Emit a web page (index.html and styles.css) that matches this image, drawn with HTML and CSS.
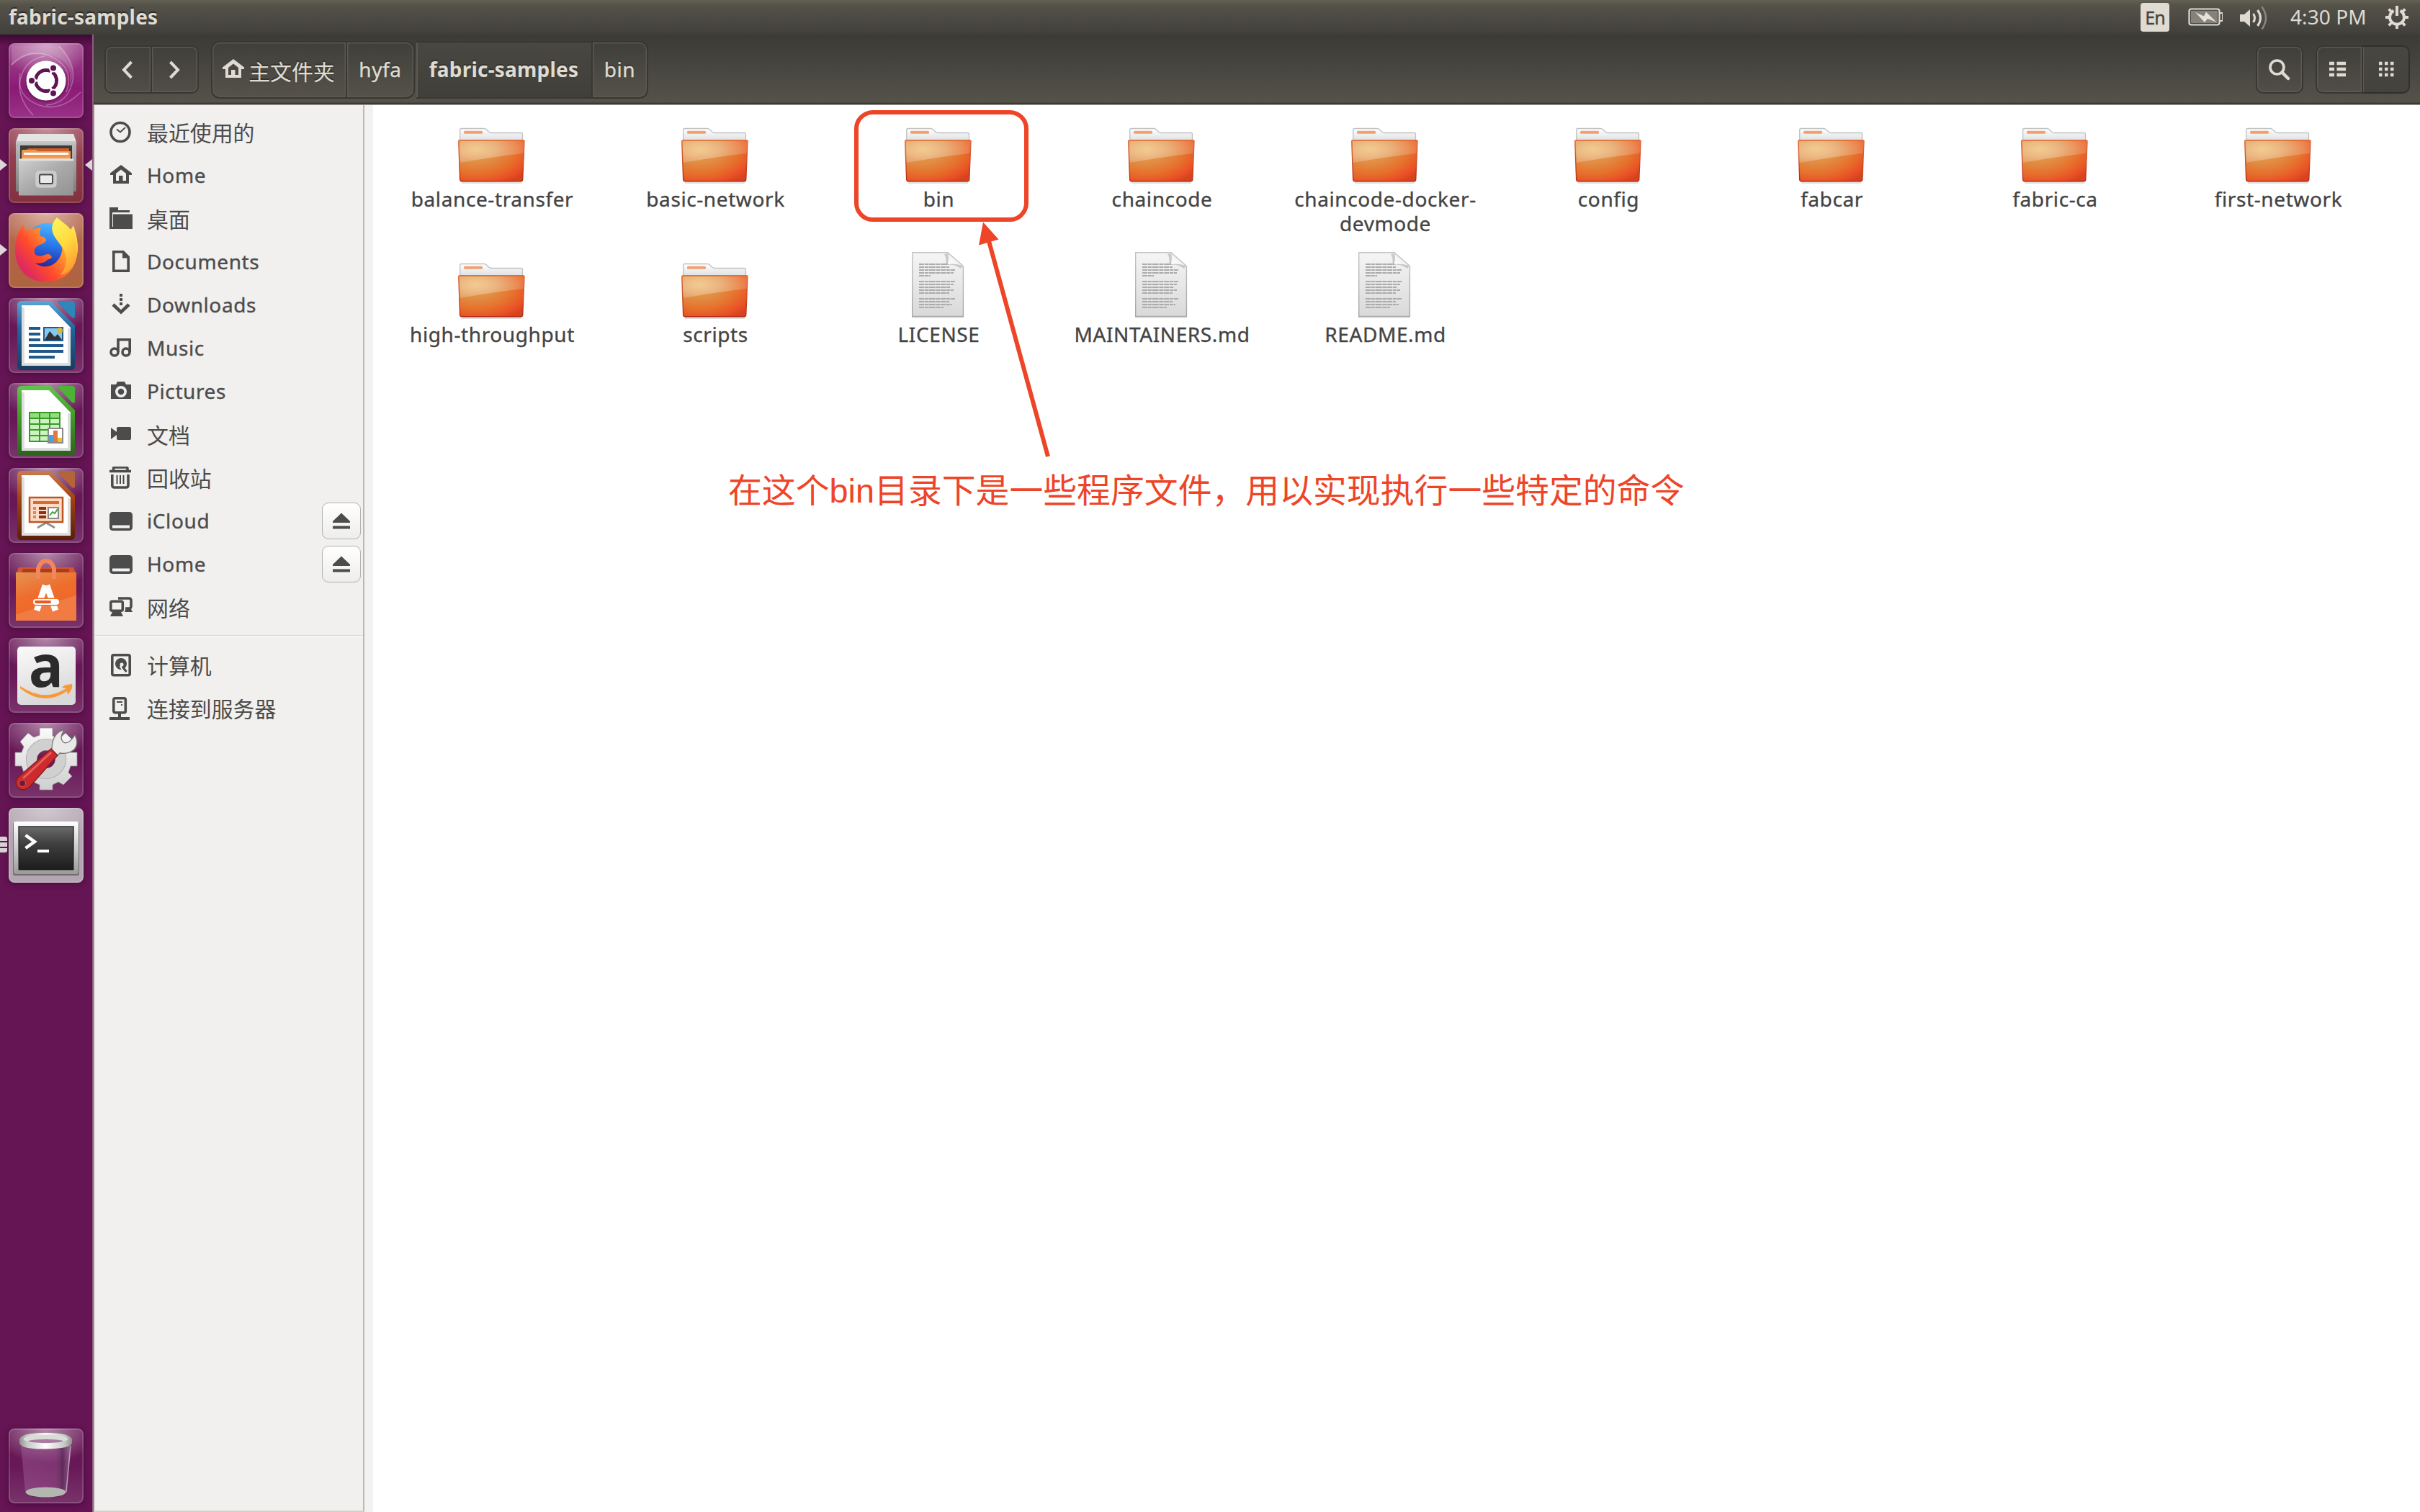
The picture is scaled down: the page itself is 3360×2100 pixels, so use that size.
FILE: index.html
```html
<!DOCTYPE html>
<html lang="zh-CN">
<head>
<meta charset="utf-8">
<title>fabric-samples</title>
<link rel="stylesheet" href="styles.css">
</head>
<body>
<svg class="defs" width="0" height="0" aria-hidden="true">
  <defs>
    <radialGradient id="folderFront" cx="0.27" cy="0.2" r="0.95">
      <stop offset="0" stop-color="#e6a653"/><stop offset="0.35" stop-color="#e18f45"/><stop offset="0.65" stop-color="#e6702c"/><stop offset="0.88" stop-color="#ea4f25"/><stop offset="1" stop-color="#d5431f"/>
    </radialGradient>
    <linearGradient id="folderBack" x1="0" y1="0" x2="0" y2="1"><stop offset="0" stop-color="#fff"/><stop offset="1" stop-color="#d5d7da"/></linearGradient>
    <radialGradient id="folderGloss" cx="0.27" cy="0.4" r="0.8"><stop offset="0" stop-color="#ffeecb" stop-opacity="0.5"/><stop offset="0.5" stop-color="#fff" stop-opacity="0.28"/><stop offset="1" stop-color="#fff" stop-opacity="0.12"/></radialGradient>
    <linearGradient id="folderEdge" x1="0" y1="0" x2="0" y2="1"><stop offset="0" stop-color="#e07040"/><stop offset="1" stop-color="#b02c12"/></linearGradient>
    <linearGradient id="paper" x1="0" y1="0" x2="0" y2="1"><stop offset="0" stop-color="#f5f5f5"/><stop offset="1" stop-color="#d9d9d9"/></linearGradient>
    <linearGradient id="paperEdge" x1="0" y1="0" x2="0" y2="1"><stop offset="0" stop-color="#c4c4c4"/><stop offset="1" stop-color="#a6a6a6"/></linearGradient>
    <linearGradient id="curl" x1="0" y1="1" x2="1" y2="0"><stop offset="0" stop-color="#fff"/><stop offset="0.45" stop-color="#f4f4f4"/><stop offset="0.6" stop-color="#c9c9c9"/></linearGradient>
    <linearGradient id="steel" x1="0" y1="0" x2="0" y2="1"><stop offset="0" stop-color="#e2e2e2"/><stop offset="0.2" stop-color="#b9b9b9"/><stop offset="1" stop-color="#7c7c7c"/></linearGradient>
    <linearGradient id="drawer" x1="0" y1="0" x2="1" y2="1"><stop offset="0" stop-color="#cfcfcf"/><stop offset="0.5" stop-color="#a9a9a9"/><stop offset="1" stop-color="#929292"/></linearGradient>
    <linearGradient id="foxRed" x1="0.9" y1="0.1" x2="0.1" y2="0.7"><stop offset="0" stop-color="#ffe14b"/><stop offset="0.35" stop-color="#ff9a30"/><stop offset="0.7" stop-color="#ff4a2c"/><stop offset="1" stop-color="#e02a5e"/></linearGradient>
    <linearGradient id="foxGlobe" x1="0.6" y1="0" x2="0.4" y2="1"><stop offset="0" stop-color="#4db8ff"/><stop offset="0.5" stop-color="#2672e8"/><stop offset="1" stop-color="#2c1c86"/></linearGradient>
    <linearGradient id="foxTail" x1="0.2" y1="0" x2="0.6" y2="1"><stop offset="0" stop-color="#fff45a"/><stop offset="0.5" stop-color="#ffd93f"/><stop offset="1" stop-color="#ff9a32"/></linearGradient>
    <linearGradient id="loBlue" x1="0" y1="0" x2="0" y2="1"><stop offset="0" stop-color="#5aa5d4"/><stop offset="0.4" stop-color="#22659d"/><stop offset="1" stop-color="#173c60"/></linearGradient>
    <linearGradient id="loGreen" x1="0" y1="0" x2="0" y2="1"><stop offset="0" stop-color="#62c34b"/><stop offset="0.4" stop-color="#43a02b"/><stop offset="1" stop-color="#2b641c"/></linearGradient>
    <linearGradient id="loBrown" x1="0" y1="0" x2="0" y2="1"><stop offset="0" stop-color="#c77b4c"/><stop offset="0.4" stop-color="#a04312"/><stop offset="1" stop-color="#58200a"/></linearGradient>
    <linearGradient id="bag" x1="0" y1="0" x2="0.4" y2="1"><stop offset="0" stop-color="#e59352"/><stop offset="0.5" stop-color="#ee6d2d"/><stop offset="0.75" stop-color="#ef6a2a"/><stop offset="0.76" stop-color="#f07b43"/><stop offset="1" stop-color="#f07b43"/></linearGradient>
    <linearGradient id="plate" x1="0" y1="0" x2="0.3" y2="1"><stop offset="0" stop-color="#fafafa"/><stop offset="1" stop-color="#d9d9d9"/></linearGradient>
    <linearGradient id="gearFill" x1="0" y1="0" x2="0" y2="1"><stop offset="0" stop-color="#fafafa"/><stop offset="1" stop-color="#cfcfcf"/></linearGradient>
    <linearGradient id="screen" x1="0" y1="0" x2="0" y2="1"><stop offset="0" stop-color="#6a6a6a"/><stop offset="0.4" stop-color="#3f3f3f"/><stop offset="1" stop-color="#1c1c1c"/></linearGradient>
    <linearGradient id="bezel" x1="0" y1="0" x2="0" y2="1"><stop offset="0" stop-color="#fff"/><stop offset="1" stop-color="#9a9a9a"/></linearGradient>
    <linearGradient id="rim" x1="0" y1="0" x2="1" y2="0"><stop offset="0" stop-color="#8f948c"/><stop offset="0.15" stop-color="#c8cac6"/><stop offset="0.5" stop-color="#fff"/><stop offset="0.85" stop-color="#c8cac6"/><stop offset="1" stop-color="#8f948c"/></linearGradient>
    <linearGradient id="can" x1="0" y1="0" x2="1" y2="0"><stop offset="0" stop-color="#a0609a" stop-opacity="0.45"/><stop offset="0.7" stop-color="#9a5590" stop-opacity="0.45"/><stop offset="0.84" stop-color="#58305a" stop-opacity="0.7"/><stop offset="1" stop-color="#b784ae" stop-opacity="0.5"/></linearGradient>
  </defs>

  <symbol id="folder" viewBox="0 0 96 96">
    <path d="M7 93.500H90" stroke="#000" stroke-opacity="0.13" stroke-width="3"/>
    <path d="M4.700 40V20.500q0-2 2-2H38q2 0 3.500 1.500L45 23.300q1.500 1.200 3.500 1.200H89.500q2 0 2 2V40z" fill="url(#folderBack)" stroke="#bfc1c3" stroke-width="1.300"/>
    <rect x="10" y="21.800" width="26" height="4" rx="1.500" fill="#f0a170"/>
    <path d="M2.700 36.300q0-1.500 1.500-1.500H92.500q1.700 0 1.500 1.700L91.700 89.700q-.2 2-2 2H6.700q-1.800 0-2-2z" fill="url(#folderFront)" stroke="url(#folderEdge)" stroke-width="1.400"/>
    <path d="M4 36H93L92.600 53Q50 58 4.500 66z" fill="url(#folderGloss)"/>
  </symbol>

  <symbol id="document" viewBox="0 0 96 96">
    <path d="M12 93H84" stroke="#000" stroke-opacity="0.12" stroke-width="2"/>
    <path d="M12.700 2.700H62L83.400 21.500V91.400H12.700z" fill="url(#paper)" stroke="url(#paperEdge)" stroke-width="1.400"/>
    <g stroke="#ababab" stroke-width="2" stroke-dasharray="7 .8 5 .8 9 .8 6 .8">
      <path d="M22 19H62M22 23H64M22 27H72M22 31H70M22 35H38M22 43H72M22 47H70M22 51H66M22 55H70M22 59H64M22 67H72M22 71H64M22 75H68M22 79H56"/>
    </g>
    <path d="M57 5Q61 12 59 20Q70 18 80 25L82 22L62 4z" fill="#000" fill-opacity="0.16"/>
    <path d="M62 3Q63 12 61.500 19.500Q70 18 83 21.500z" fill="url(#curl)" stroke="#c0c0c0" stroke-width="0.800"/>
  </symbol>

  <symbol id="s-home" viewBox="0 0 32 32"><path d="M16 1L31 12.500V15H27V27H5V15H1V12.500z M9 13V23H13V16H18.500V23H23V13L16 7.500z" fill="currentColor" fill-rule="evenodd"/></symbol>
  <symbol id="s-eject" viewBox="0 0 24 24"><path d="M12 1.500L24 13V15H0V13z M0 19.500H24V23.500H0z" fill="currentColor"/></symbol>
  <symbol id="s-drive" viewBox="0 0 32 32"><path d="M5 3H27q5 0 5 5V24q0 5-5 5H5q-5 0-5-5V8q0-5 5-5z M4 21.500V25.500H28V21.500z" fill="currentColor" fill-rule="evenodd"/></symbol>
</svg>

<header class="panel">
  <span class="panel-title">fabric-samples</span>
  <span class="panel-lang">En</span>
  <svg class="panel-battery" viewBox="0 0 48 28"><rect x="1.500" y="2.500" width="42" height="22" rx="3" fill="none" stroke="#dfdbd2" stroke-width="2.200"/><rect x="4" y="5" width="37" height="17" fill="#85827b"/><path d="M44 8h2.500q1.500 0 1.500 1.500v8q0 1.500-1.500 1.500H44" fill="none" stroke="#dfdbd2" stroke-width="2"/><path d="M10 7L22 12.500L25 6.500L39 20.500L27 16L23 21z" fill="#e6e2da"/></svg>
  <svg class="panel-volume" viewBox="0 0 38 34"><path d="M0 12H6L14 5V29L6 22H0z" fill="#dfdbd2"/><g fill="none" stroke="#dfdbd2" stroke-width="3"><path d="M18.500 11q4 6 0 12"/><path d="M24.500 6q8 11 0 22"/><path d="M30.500 1.500q11 15.500 0 31" stroke="#8b8880" stroke-width="2.400"/></g></svg>
  <span class="panel-clock">4:30 PM</span>
  <svg class="panel-gear" viewBox="0 0 32 32"><g fill="none" stroke="#dfdbd2"><path d="M20.500 6.900A10 10 0 1 1 11.500 6.900" stroke-width="4"/><path d="M16 0V14" stroke-width="4"/><path d="M0 16H5M27 16H32M16 27V32M4.700 4.700L8.500 8.500M27.300 4.700L23.500 8.500M4.700 27.300L8.500 23.500M27.300 27.300L23.500 23.500" stroke-width="3.800"/></g></svg>
</header>

<div class="desktop">
  <nav class="launcher">
    <div class="tile tile-dash">
      <svg viewBox="0 0 104 104"><g fill="none" stroke="#fff" stroke-opacity="0.28" stroke-width="1.600"><path d="M4 30Q30 4 62 20Q92 36 80 68"/><path d="M70 4Q98 32 86 62Q78 84 52 86"/><path d="M100 68Q72 96 42 86Q10 74 16 42"/><path d="M34 100Q8 72 18 44Q26 22 50 18"/></g><path d="M4 3H70Q98 34 84 60Q92 20 50 16Q22 12 4 32z" fill="#fff" fill-opacity="0.14"/><circle cx="52" cy="54" r="28.500" fill="#000" fill-opacity="0.2"/><circle cx="52" cy="52" r="27.500" fill="#fff"/><circle cx="52" cy="52" r="14.500" fill="none" stroke="#5f1551" stroke-width="5"/><path d="M52 52L31 52M52 52L62.500 34M52 52L62.500 70" stroke="#fff" stroke-width="3"/><g fill="#5f1551" stroke="#fff" stroke-width="2"><circle cx="32" cy="52" r="5"/><circle cx="62" cy="34.600" r="5"/><circle cx="62" cy="69.400" r="5"/></g><circle cx="52" cy="52" r="12" fill="#fff"/></svg>
    </div>
    <div class="tile tile-files">
      <i class="pip"></i><i class="pip pip-right"></i>
      <svg viewBox="0 0 104 104"><path d="M14 8H90L94 19V88H10V19z" fill="url(#steel)"/><path d="M14 8H90L93 18H11z" fill="#e4e4e4"/><rect x="16" y="24" width="72" height="22" fill="#3c3c3a"/><path d="M22 31L28 28H84V44H20z" fill="#cf5c27"/><path d="M18 32q0-2 2-2h17q2 0 3 2H86V46H18z" fill="#f0964f"/><rect x="21" y="34" width="62" height="3" fill="#fff"/><path d="M18 41H86V46H18z" fill="#f3b57b"/><path d="M14 44H90V93.500H14z" fill="url(#drawer)"/><path d="M14 42.500H90V45.500H14z" fill="#e0e0e0"/><rect x="38" y="60" width="28" height="22" rx="4" fill="#c9c9c9" stroke="#d8d8d8"/><rect x="43" y="64.500" width="18" height="12.500" rx="2" fill="#e9e9e9" stroke="#4a4a4a" stroke-width="2"/></svg>
    </div>
    <div class="tile tile-firefox">
      <i class="pip"></i>
      <svg viewBox="0 0 104 104"><circle cx="54" cy="46" r="32" fill="url(#foxGlobe)"/><path d="M20 16Q22 22 24 25Q32 22 45 20Q42 26 44 32Q52 33 52 38Q50 42 43 44Q34 47 36 56Q40 62 50 58Q58 55 60 62Q54 64 50 68Q42 71 36 69Q52 80 66 68Q76 58 74 44L84 26L90 17Q97 38 96 52Q92 92 54 96Q12 94 9 54Q9 30 20 16z" fill="url(#foxRed)"/><path d="M67 6Q74 12 82 18Q98 36 93 62Q88 82 72 86Q86 68 76 50Q72 44 66 36Q54 20 67 6z" fill="url(#foxTail)"/></svg>
    </div>
    <div class="tile">
      <svg viewBox="0 0 104 104"><path d="M18 4H58L92 38V94q0 6-6 6H18q-6 0-6-6V10q0-6 6-6z" fill="url(#loBlue)"/><path d="M68 6q-1-2 2-2H88q4 0 4 4V26q-1 3-4 1z" fill="#2f86bb"/><path d="M18 10H56L86 41V94H18z" fill="#fff"/><path d="M22 14V90H82V41L86 43V94H18V12z" fill="#c8c8c8" opacity="0.6"/><path d="M28 42H44M28 50H44M28 58H44M28 66H76M28 74H76M28 82H64" stroke="#20598c" stroke-width="4"/><rect x="49" y="41" width="26" height="18" fill="#86c8f0" stroke="#20598c" stroke-width="2"/><circle cx="71" cy="45" r="4" fill="#d9b93c"/><path d="M50 58L57 46L64 54L68 50L74 58z" fill="#333"/></svg>
    </div>
    <div class="tile">
      <svg viewBox="0 0 104 104"><path d="M18 4H58L92 38V94q0 6-6 6H18q-6 0-6-6V10q0-6 6-6z" fill="url(#loGreen)"/><path d="M68 6q-1-2 2-2H88q4 0 4 4V26q-1 3-4 1z" fill="#4db336"/><path d="M18 10H56L86 41V94H18z" fill="#fff"/><path d="M22 14V90H82V41L86 43V94H18V12z" fill="#c8c8c8" opacity="0.6"/><rect x="29" y="41" width="42" height="40" fill="#cbf3c0" stroke="#3b9a24" stroke-width="2"/><rect x="30" y="42" width="40" height="6" fill="#92dd80"/><path d="M29 49H71M29 57H71M29 65H71M29 73H71M43 41V81M57 41V81" stroke="#3b9a24" stroke-width="2"/><rect x="55" y="63" width="20" height="20" fill="#fff" stroke="#8a8a8a" stroke-width="2"/><path d="M56 72h6v10h-6z" fill="#3fa3ea"/><path d="M62 66h6v16h-6z" fill="#e4783c"/><path d="M68 76h6v6h-6z" fill="#eec02e"/></svg>
    </div>
    <div class="tile">
      <svg viewBox="0 0 104 104"><path d="M18 4H58L92 38V94q0 6-6 6H18q-6 0-6-6V10q0-6 6-6z" fill="url(#loBrown)"/><path d="M68 6q-1-2 2-2H88q4 0 4 4V26q-1 3-4 1z" fill="#b5643a"/><path d="M18 10H56L86 41V94H18z" fill="#fff"/><path d="M22 14V90H82V41L86 43V94H18V12z" fill="#c8c8c8" opacity="0.6"/><path d="M52 76L40 83M52 76L64 83" stroke="#8f8f8f" stroke-width="3"/><rect x="29" y="41" width="46" height="34" fill="#fbdcc9" stroke="#bd5520" stroke-width="2.500"/><path d="M34 48H70" stroke="#dd6a2a" stroke-width="4"/><path d="M34 56H38M34 62H38M34 68H38" stroke="#e58850" stroke-width="4"/><path d="M42 56H52M42 62H52M42 68H52" stroke="#8c3310" stroke-width="4"/><rect x="55" y="55" width="14" height="15" fill="#fff" stroke="#8a8a8a" stroke-width="2"/><path d="M57 66L61 61L64 63L68 57" fill="none" stroke="#3aa82a" stroke-width="2"/></svg>
    </div>
    <div class="tile">
      <svg viewBox="0 0 104 104"><path d="M14 20H90L93 28H11z" fill="#d9532c"/><path d="M20 22H84V28H18z" fill="#a83d20"/><path d="M10 27H94V94H10z" fill="url(#bag)"/><path d="M41 36V22q3-11 11-11t11 11V36" fill="none" stroke="#f3855c" stroke-width="6"/><path d="M51 45L39 80M53 45L65 80" stroke="#fff" stroke-width="8.500"/><path d="M35 68H69" stroke="#ee6d2d" stroke-width="11"/><path d="M38 68H66" stroke="#fff" stroke-width="8" stroke-linecap="round"/><path d="M38 68H57" stroke="#ea5a26" stroke-width="4" stroke-linecap="round"/></svg>
    </div>
    <div class="tile">
      <svg viewBox="0 0 104 104"><rect x="12" y="12" width="81" height="81" rx="5" fill="url(#plate)"/><text class="mark-a" x="52" y="68" text-anchor="middle">a</text><path d="M16 67Q50 90 80 70L74 69Q76 65 88 64Q90 70 82 79L81 74Q48 96 16 70z" fill="#f79a36"/></svg>
    </div>
    <div class="tile">
      <svg viewBox="0 0 104 104"><path d="M43 7H61V18L70 22L79 14L90 25L83 34L86 41H95V60H86L83 69L88 74L76 86L69 82L61 86V93H43V86L34 82L27 87L16 76L21 69L18 60H9V41H18L21 33L16 26L27 14L35 20L43 17z M52 38A13 13 0 1 0 52 64A13 13 0 1 0 52 38z" fill="url(#gearFill)" fill-rule="evenodd" stroke="#8e8e8e" stroke-width="0.800"/><circle cx="52" cy="50" r="20" fill="none" stroke="#d0d0d0" stroke-width="14"/><circle cx="52" cy="50" r="27.500" fill="none" stroke="#b2b2b2" stroke-width="1.200"/><path d="M60 36Q60 14 78 9Q70 19 75 26Q82 32 92 17Q98 28 91 37Q82 44 71 42L66 47L58 40z" fill="#e9eae7" stroke="#777" stroke-width="1.300"/><path d="M59 36L68 45L29 89Q20 97 12 89Q7 80 16 73z" fill="#cb2b2d" stroke="#86191b" stroke-width="1.300"/><path d="M59 41L20 77" stroke="#e8605c" stroke-width="3"/><circle cx="19" cy="84" r="4.500" fill="#6c1a3a" stroke="#e05a55"/></svg>
    </div>
    <div class="tile tile-terminal">
      <i class="pips"></i>
      <svg viewBox="0 0 104 104"><rect x="6" y="20" width="92" height="74" rx="3" fill="#6e6e6e"/><rect x="7" y="19" width="90" height="73" rx="3" fill="url(#bezel)"/><rect x="13" y="25" width="78" height="62" fill="#bcbcbc"/><rect x="14" y="26" width="76" height="60" fill="url(#screen)" stroke="#111"/><path d="M23.500 38L36 47L23.500 56" fill="none" stroke="#fff" stroke-width="4.500"/><path d="M40 60H56" stroke="#fff" stroke-width="4"/></svg>
    </div>
    <div class="tile tile-trash">
      <svg viewBox="0 0 104 104"><path d="M17 22H86L80 88H23z" fill="url(#can)"/><path d="M86 24L80 88" stroke="#b9a0b5" stroke-width="1.500"/><ellipse cx="51.500" cy="90" rx="28" ry="6" fill="#000" fill-opacity="0.25"/><ellipse cx="51.500" cy="88.500" rx="28" ry="7" fill="#b3b6b1"/><path d="M15 16Q15 6 51.500 6T88 16V20Q86 28 51.500 28.500T15 20z" fill="url(#rim)"/><ellipse cx="51.500" cy="14.500" rx="31" ry="6" fill="#d9dbd7"/><ellipse cx="51.500" cy="17.500" rx="24" ry="2.500" fill="#a77c9f"/></svg>
    </div>
  </nav>

  <main class="window">
    <div class="toolbar">
      <div class="btn-group">
        <button class="btn"><svg class="ico-chevron" viewBox="0 0 16 26"><path d="M13.500 2L3 13L13.500 24" fill="none" stroke="currentColor" stroke-width="4"/></svg></button>
        <button class="btn"><svg class="ico-chevron" viewBox="0 0 16 26"><path d="M2.500 2L13 13L2.500 24" fill="none" stroke="currentColor" stroke-width="4"/></svg></button>
      </div>
      <div class="crumbs">
        <button class="crumb crumb-home"><svg class="ico"><use href="#s-home"/></svg><span class="cjk">主文件夹</span></button>
        <button class="crumb crumb-user">hyfa</button>
        <button class="crumb crumb-current">fabric-samples</button>
        <button class="crumb crumb-last">bin</button>
      </div>
      <button class="btn btn-search"><svg class="ico-search" viewBox="0 0 30 30"><circle cx="11.500" cy="11.500" r="9.500" fill="none" stroke="currentColor" stroke-width="3.600"/><path d="M18.500 18.500L27 27" stroke="currentColor" stroke-width="4.500" stroke-linecap="round"/></svg></button>
      <div class="btn-group">
        <button class="btn btn-list"><svg class="ico-view" viewBox="0 0 24 24"><path d="M0 3H7M10.500 3H23M0 11H7M10.500 11H23M0 19H7M10.500 19H23" stroke="currentColor" stroke-width="4.500"/></svg></button>
        <button class="btn btn-on"><svg class="ico-view" viewBox="0 0 24 24"><path d="M2 3H6.500M10 3H14.500M18 3H22.500M2 11H6.500M10 11H14.500M18 11H22.500M2 19H6.500M10 19H14.500M18 19H22.500" stroke="currentColor" stroke-width="4.500"/></svg></button>
      </div>
    </div>

    <div class="content">
      <aside class="sidebar">
        <div class="place"><svg class="ico" viewBox="0 0 32 32"><circle cx="15" cy="15.500" r="13" fill="none" stroke="currentColor" stroke-width="3.600"/><path d="M10 11.500L15 15.500L22 9" fill="none" stroke="currentColor" stroke-width="2"/></svg><span class="cjk">最近使用的</span></div>
        <div class="place"><svg class="ico"><use href="#s-home"/></svg><span>Home</span></div>
        <div class="place"><svg class="ico" viewBox="0 0 32 32"><path d="M0 0H12V4H28V7H4V27H5V9.500H32V30H0z" fill="currentColor"/></svg><span class="cjk">桌面</span></div>
        <div class="place"><svg class="ico" viewBox="0 0 32 32"><path d="M5.800 1.800H19L26.200 9V28.200H5.800z" fill="none" stroke="currentColor" stroke-width="3.600"/><path d="M18 1V10.500H27L19 1z" fill="currentColor"/></svg><span>Documents</span></div>
        <div class="place"><svg class="ico" viewBox="0 0 32 32"><path d="M14 0h4v4h-4zM14 6h4v4h-4zM14 12h4v4h-4z" fill="currentColor"/><path d="M5 15L16 25.500L27 15" fill="none" stroke="currentColor" stroke-width="4.500"/></svg><span>Downloads</span></div>
        <div class="place"><svg class="ico" viewBox="0 0 32 32"><g fill="none" stroke="currentColor" stroke-width="3.600"><circle cx="7" cy="21" r="5"/><circle cx="23" cy="21" r="5"/><path d="M12 21V3.800H28.200V21"/></g></svg><span>Music</span></div>
        <div class="place"><svg class="ico" viewBox="0 0 32 32"><path d="M2 6H9L11 2H21L23 6H30V26H2z M16 8A8 8 0 1 0 16 24A8 8 0 1 0 16 8z" fill="currentColor" fill-rule="evenodd"/><circle cx="16" cy="16" r="4.300" fill="currentColor"/></svg><span>Pictures</span></div>
        <div class="place"><svg class="ico" viewBox="0 0 32 32"><path d="M12 5H28q2 0 2 2V21q0 2-2 2H12q-2 0-2-2V16L2 22V6L10 12V7q0-2 2-2z" fill="currentColor"/></svg><span class="cjk">文档</span></div>
        <div class="place"><svg class="ico" viewBox="0 0 32 32"><path d="M0 6.500H30M5.500 5V3q0-2 2-2H23q2 0 2 2V5M3.800 11V26q0 3 3 3H23q3 0 3-3V11" fill="none" stroke="currentColor" stroke-width="3.600"/><path d="M10.500 12V24M15 12V24M19.500 12V24" stroke="currentColor" stroke-width="2"/></svg><span class="cjk">回收站</span></div>
        <div class="place"><svg class="ico"><use href="#s-drive"/></svg><span>iCloud</span><button class="eject"><svg><use href="#s-eject"/></svg></button></div>
        <div class="place"><svg class="ico"><use href="#s-drive"/></svg><span>Home</span><button class="eject"><svg><use href="#s-eject"/></svg></button></div>
        <div class="place"><svg class="ico" viewBox="0 0 32 32"><g fill="none" stroke="currentColor" stroke-width="3.600"><rect x="1.800" y="7.300" width="16.500" height="13" rx="2"/><path d="M12 3H27q3 0 3 3V14q0 3-3 3H22"/></g><path d="M4 22H16L19 28H1zM23 16H29L32 22H21z" fill="currentColor"/></svg><span class="cjk">网络</span></div>
        <hr class="divider">
        <div class="place"><svg class="ico" viewBox="0 0 32 32"><rect x="3.800" y="1.800" width="24.400" height="28" rx="2" fill="none" stroke="currentColor" stroke-width="3.600"/><circle cx="16" cy="14" r="8" fill="currentColor"/><circle cx="17" cy="15" r="2.500" fill="#f1f0ee"/><path d="M15 17L21 25" stroke="#f1f0ee" stroke-width="3"/><path d="M18 18L23.500 25" stroke="currentColor" stroke-width="3"/></svg><span class="cjk">计算机</span></div>
        <div class="place"><svg class="ico" viewBox="0 0 32 32"><rect x="5.800" y="1.800" width="16.500" height="20" rx="2" fill="none" stroke="currentColor" stroke-width="3.600"/><path d="M10 7H18M16 11H18" stroke="currentColor" stroke-width="2"/><path d="M14 22V30M0 30H28" stroke="currentColor" stroke-width="4"/></svg><span class="cjk">连接到服务器</span></div>
      </aside>

      <section class="files">
        <div class="file"><svg><use href="#folder"/></svg><span>balance-transfer</span></div>
        <div class="file"><svg><use href="#folder"/></svg><span>basic-network</span></div>
        <div class="file"><svg><use href="#folder"/></svg><span>bin</span></div>
        <div class="file"><svg><use href="#folder"/></svg><span>chaincode</span></div>
        <div class="file"><svg><use href="#folder"/></svg><span>chaincode-docker-<br>devmode</span></div>
        <div class="file"><svg><use href="#folder"/></svg><span>config</span></div>
        <div class="file"><svg><use href="#folder"/></svg><span>fabcar</span></div>
        <div class="file"><svg><use href="#folder"/></svg><span>fabric-ca</span></div>
        <div class="file"><svg><use href="#folder"/></svg><span>first-network</span></div>
        <div class="file"><svg><use href="#folder"/></svg><span>high-throughput</span></div>
        <div class="file"><svg><use href="#folder"/></svg><span>scripts</span></div>
        <div class="file"><svg><use href="#document"/></svg><span>LICENSE</span></div>
        <div class="file"><svg><use href="#document"/></svg><span>MAINTAINERS.md</span></div>
        <div class="file"><svg><use href="#document"/></svg><span>README.md</span></div>
      </section>
    </div>
  </main>
</div>

<svg class="callout" viewBox="0 0 290 490">
  <g fill="none" stroke="#ee4427" stroke-width="6"><rect x="9" y="6" width="236" height="149" rx="23"/><path d="M193 185L275 484"/></g>
  <path d="M185 158.500L179 190.500L206.500 182.500z" fill="#ee4427"/>
</svg>
<p class="callout-text">在这个bin目录下是一些程序文件，用以实现执行一些特定的命令</p>
</body>
</html>
```
FILE: styles.css
```css
* { box-sizing: border-box; }

body {
  margin: 0;
  width: 3360px;
  height: 2100px;
  position: relative;
  overflow: hidden;
  display: flex;
  flex-direction: column;
  background: #fff;
  color: #4c4c4c;
  font: 28px/34px "Noto Sans", "Noto Sans CJK SC", sans-serif;
  letter-spacing: 0.6px;
  -webkit-text-stroke: 0.35px currentColor;
}

button {
  margin: 0;
  padding: 0;
  border: 0;
  background: none;
  color: inherit;
  font: inherit;
  letter-spacing: inherit;
}

svg { display: block; flex: none; }
.defs { position: absolute; }
.cjk { font: 29.900px/34px "Noto Sans CJK SC", sans-serif; letter-spacing: 0; -webkit-text-stroke: 0; }
.ico { width: 32px; height: 32px; }

/* top panel */
.panel {
  flex: none;
  height: 48px;
  display: flex;
  align-items: center;
  padding: 0 16px 0 12px;
  color: #dfdbd2;
  background: linear-gradient(#636054, #55524a 15%, #403f3a);
}
.panel-title { flex: 1; margin-top: -2px; font-weight: 700; letter-spacing: 0.2px; text-shadow: 0 -2px 1px #2c2b28; -webkit-text-stroke: 0; }
.panel-lang {
  width: 40px;
  height: 40px;
  margin: -1px 26px 0 0;
  border-radius: 4px;
  background: #dfdbd2;
  color: #45443f;
  font-size: 25px;
  line-height: 41px;
  text-align: center;
  letter-spacing: -1px;
}
.panel-battery { width: 48px; height: 28px; margin-right: 24px; }
.panel-volume { width: 38px; height: 34px; margin: 2px 32px 0 0; }
.panel-clock { width: 106px; margin: -2px 26px 0 0; letter-spacing: 0.1px; white-space: nowrap; -webkit-text-stroke: 0; }
.panel-gear { width: 32px; height: 32px; margin-top: -1px; }

.desktop { flex: 1; min-height: 0; display: flex; }

/* launcher */
.launcher {
  flex: none;
  width: 130px;
  display: flex;
  flex-direction: column;
  gap: 14px;
  padding: 12px 14px 12px 12px;
  border-right: 2px solid #8d5c80;
  background: linear-gradient(#3a0a31, #651454 16px);
}
.tile {
  position: relative;
  flex: none;
  width: 104px;
  height: 104px;
  border-radius: 8px;
  background: radial-gradient(75px 48px at 50% 0, rgba(255, 255, 255, 0.5), rgba(255, 255, 255, 0.02)),
    linear-gradient(rgba(255, 255, 255, 0) 50%, rgba(255, 255, 255, 0.12));
  box-shadow: inset 0 0 0 2px rgba(255, 255, 255, 0.15), 0 2px 8px rgba(30, 0, 25, 0.4);
}
.tile svg { width: 104px; height: 104px; overflow: visible; }
.tile-dash { background: radial-gradient(60px 50px at 50% 0, #cf9fc4, rgba(207, 159, 196, 0)), linear-gradient(#a04a8e, #8b1a75 60%, #9a3288); }
.tile-files { background: radial-gradient(70px 50px at 50% 0, rgba(255, 255, 255, 0.4), rgba(255, 255, 255, 0)), linear-gradient(#9a4858, #83313f); }
.tile-firefox { background: radial-gradient(75px 50px at 50% 0, rgba(255, 255, 255, 0.5), rgba(255, 255, 255, 0)), linear-gradient(#b5674d, #ae6340); }
.tile-terminal { background: radial-gradient(75px 50px at 50% 0, rgba(255, 255, 255, 0.4), rgba(255, 255, 255, 0)), #b3a5b1; }
.tile-trash { margin-top: auto; }
.pip {
  position: absolute;
  left: -12px;
  top: 43px;
  border: 8px solid transparent;
  border-left: 10px solid #dcd6da;
  border-right: 0;
}
.pip-right {
  left: 106px;
  border: 8px solid transparent;
  border-right: 10px solid #dcd6da;
  border-left: 0;
}
.pips {
  position: absolute;
  left: -12px;
  top: 40px;
  width: 10px;
  height: 22px;
  border-radius: 0 3px 3px 0;
  background: repeating-linear-gradient(#d6d2d4 0 6px, transparent 6px 8px);
}
.mark-a { font: 700 80px "Open Sans", sans-serif; letter-spacing: 0; fill: #2b2b2b; -webkit-text-stroke: 0; }

/* file manager window */
.window { flex: 1; min-width: 0; display: flex; flex-direction: column; }
.toolbar {
  flex: none;
  height: 98px;
  display: flex;
  align-items: center;
  padding: 0 14px 0 15px;
  color: #dfdbd2;
  background: linear-gradient(#3c3b37 3px, #403f3a 20%, #55524a 94px, #3c3a35 95px 97px, #a5a39f 97px);
}
.btn-group { display: flex; }
.btn {
  width: 66px;
  height: 67px;
  display: flex;
  align-items: center;
  justify-content: center;
  border: 2px solid #383733;
  border-radius: 10px;
  background: linear-gradient(#403f3a, #504e46);
  box-shadow: inset 0 0 0 1.500px #5c594f;
}
.btn-group, .btn-search { margin-top: -1px; }
.btn-group .btn:first-child { border-radius: 10px 0 0 10px; }
.btn-group .btn:last-child { border-radius: 0 10px 10px 0; border-left: 0; width: 65px; }
.btn-group .btn-on { background: linear-gradient(#494741, #43423c); box-shadow: inset 1px 0 0 #5c594f; border-color: #31302c; }
.btn-group .btn-list { padding-right: 4px; }
.btn-search { margin: -1px 17px 0 auto; }
.ico-chevron { width: 16px; height: 26px; margin-right: 2px; }
.ico-search { width: 30px; height: 30px; }
.ico-view { width: 24px; height: 24px; }

.crumbs { display: flex; margin-left: 17px; }
.crumb {
  height: 80px;
  display: flex;
  align-items: center;
  justify-content: center;
  padding-bottom: 2px;
  border: 2px solid #383733;
  border-left: 0;
  background: linear-gradient(#403f3a, #55524a);
  box-shadow: inset 0 0 0 1.500px #5c594f;
  text-shadow: 0 -2px 1px #33322e;
}
.crumb-home { width: 189px; gap: 5px; border-left: 2px solid #383733; border-radius: 12px 0 0 12px; }
.crumb-home .ico { margin: 1px 0 0 -2px; }
.crumb-home .cjk { margin-top: 4px; }
.crumb-user { width: 94px; border-radius: 0 12px 12px 0; }
.crumb-current { width: 245px; margin-left: 2px; font-weight: 700; letter-spacing: 0.2px; -webkit-text-stroke: 0; background: linear-gradient(#494741, #403f39); box-shadow: inset 2px 0 0 #5c594f; }
.crumb-last { width: 77px; border-radius: 0 12px 12px 0; }

.content { flex: 1; min-height: 0; display: flex; }
.sidebar {
  flex: none;
  width: 376px;
  padding-top: 7px;
  border-right: 2px solid #bbb8b3;
  border-bottom: 2px solid #d2d0cd;
  border-left: 2px solid #d8d5d1;
  background: #f1f0ee;
}
.place {
  height: 60px;
  display: flex;
  align-items: center;
  padding: 0 3px 0 20px;
}
.place .ico { margin-top: 2px; }
.place span { margin: 0 0 0 20px; }
.place .cjk { margin: 0 0 0 20px; }
.eject {
  width: 54px;
  height: 51px;
  margin-left: auto;
  margin-top: 1px;
  display: flex;
  align-items: center;
  justify-content: center;
  border: 1.500px solid #b2b0ac;
  border-radius: 9px;
  background: linear-gradient(#fff, #ededeb);
}
.eject svg { width: 24px; height: 24px; margin-top: -2px; }
.divider { height: 3px; margin: 9px 0 8px; border: 0; border-top: 1.500px solid #d8d6d3; border-bottom: 1.500px solid #fff; }

.files {
  flex: 1;
  display: grid;
  grid-template-columns: repeat(9, 310px);
  grid-auto-rows: 188px;
  padding-left: 9px;
  border-left: 12px solid #f3f2f1;
}
.file {
  display: flex;
  flex-direction: column;
  align-items: center;
  gap: 3px;
  padding-top: 14px;
  color: #444;
  text-align: center;
  white-space: nowrap;
}
.file svg { width: 96px; height: 96px; }
.file span { padding-left: 3px; }

/* markup drawn over the window */
.callout { position: absolute; left: 1180px; top: 150px; width: 290px; height: 490px; }
.callout-text {
  position: absolute;
  left: 1011px;
  top: 652px;
  margin: 0;
  color: #ee4427;
  font: 46.850px/60px "Liberation Sans", "Noto Sans CJK SC", sans-serif;
  letter-spacing: 0;
  white-space: nowrap;
  -webkit-text-stroke: 0;
}
```
